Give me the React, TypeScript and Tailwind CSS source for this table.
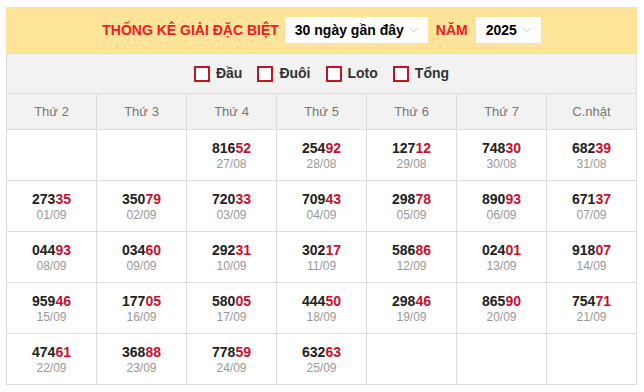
import React from 'react';
import { ChevronDown } from 'lucide-react';

type Cell = { num: string; date: string } | null;

const rows: Cell[][] = [
  [null, null, { num: '81652', date: '27/08' }, { num: '25492', date: '28/08' }, { num: '12712', date: '29/08' }, { num: '74830', date: '30/08' }, { num: '68239', date: '31/08' }],
  [{ num: '27335', date: '01/09' }, { num: '35079', date: '02/09' }, { num: '72033', date: '03/09' }, { num: '70943', date: '04/09' }, { num: '29878', date: '05/09' }, { num: '89093', date: '06/09' }, { num: '67137', date: '07/09' }],
  [{ num: '04493', date: '08/09' }, { num: '03460', date: '09/09' }, { num: '29231', date: '10/09' }, { num: '30217', date: '11/09' }, { num: '58686', date: '12/09' }, { num: '02401', date: '13/09' }, { num: '91807', date: '14/09' }],
  [{ num: '95946', date: '15/09' }, { num: '17705', date: '16/09' }, { num: '58005', date: '17/09' }, { num: '44450', date: '18/09' }, { num: '29846', date: '19/09' }, { num: '86590', date: '20/09' }, { num: '75471', date: '21/09' }],
  [{ num: '47461', date: '22/09' }, { num: '36888', date: '23/09' }, { num: '77859', date: '24/09' }, { num: '63263', date: '25/09' }, null, null, null],
];

const days = ['Thứ 2', 'Thứ 3', 'Thứ 4', 'Thứ 5', 'Thứ 6', 'Thứ 7', 'C.nhật'];
const options = ['Đầu', 'Đuôi', 'Loto', 'Tổng'];

const Select = ({ label, w }: { label: string; w: string }) => (
  <div className={`h-[26px] ${w} bg-white flex items-center justify-between pl-[10px] pr-[7px]`}>
    <span className="text-[14px] font-bold text-black">{label}</span>
    <ChevronDown size={14} strokeWidth={1.2} className="text-[#b5b5b5]" />
  </div>
);

export default function App() {
  return (
    <div className="w-[644px] h-[392px] bg-white pt-[7px] px-[6px] font-['Liberation_Sans',Arial,sans-serif]">
      <div className="w-[631px]">
        <div className="h-[46px] bg-[#fee498] flex items-center justify-center gap-[6px]">
          <span className="text-[14px] font-bold text-[#ee1c25]">THỐNG KÊ GIẢI ĐẶC BIỆT</span>
          <Select label="30 ngày gần đây" w="w-[143px]" />
          <span className="text-[14px] font-bold text-[#ee1c25] mx-[2px]">NĂM</span>
          <Select label="2025" w="w-[65px]" />
        </div>
        <div className="h-[40px] bg-[#f2f2f2] border-x border-t border-[#dddddd] flex items-center justify-center gap-[15px]">
          {options.map((o) => (
            <label key={o} className="flex items-center gap-[6px]">
              <span className="w-[16px] h-[16px] border-2 border-[#c0142b] bg-white" />
              <span className="text-[14px] font-bold text-[#333333]">{o}</span>
            </label>
          ))}
        </div>
        <table className="w-[631px] table-fixed border-collapse">
          <thead>
            <tr className="h-[36px] bg-[#f2f2f2]">
              {days.map((d) => (
                <th key={d} className="border border-[#dddddd] font-normal text-[13px] text-[#777777]">
                  {d}
                </th>
              ))}
            </tr>
          </thead>
          <tbody>
            {rows.map((r, i) => (
              <tr key={i} className="h-[51px]">
                {r.map((c, j) => (
                  <td key={j} className="border border-[#dddddd] text-center align-middle p-0">
                    {c && (
                      <div className="flex flex-col items-center leading-none">
                        <span className="text-[14px] font-bold text-[#222222]">
                          {c.num.slice(0, 3)}
                          <span className="text-[#c8102e]">{c.num.slice(3)}</span>
                        </span>
                        <span className="text-[12px] text-[#999999] mt-[3px]">{c.date}</span>
                      </div>
                    )}
                  </td>
                ))}
              </tr>
            ))}
          </tbody>
        </table>
      </div>
    </div>
  );
}
